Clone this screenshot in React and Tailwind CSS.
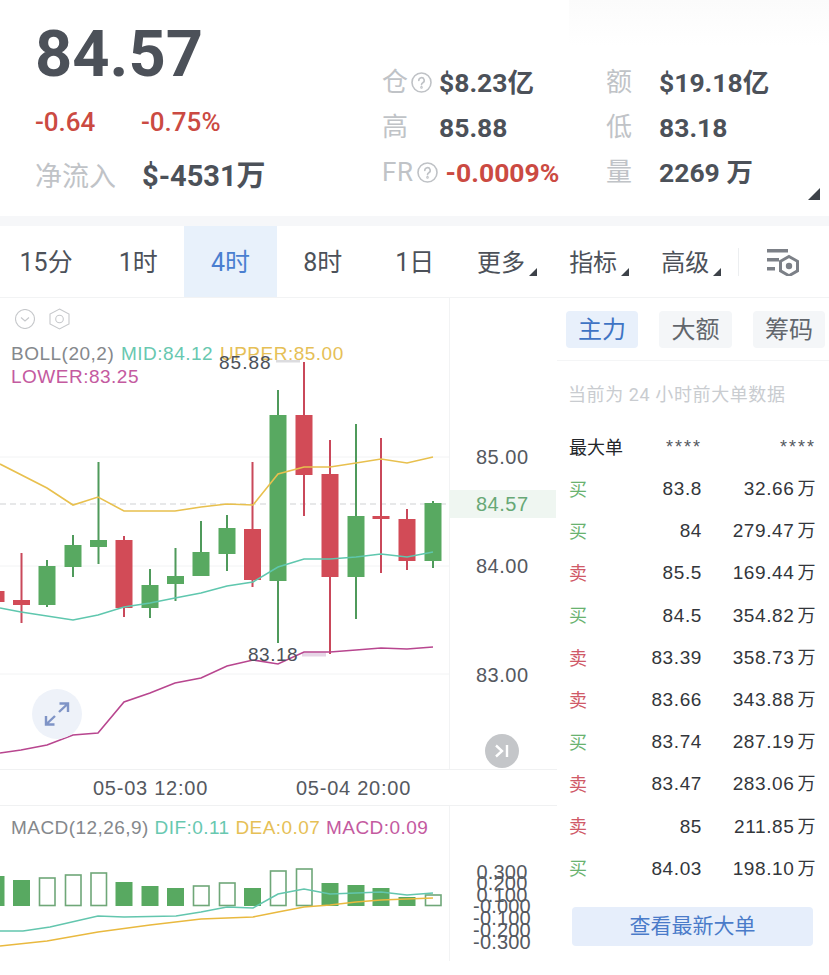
const SANS = "font-['Roboto','Noto_Sans_CJK_SC',sans-serif]";
const NUM = "font-['Liberation_Sans','Noto_Sans_CJK_SC',sans-serif]";

const GREEN = "#58a961";
const RED = "#d24b57";

// [center x, wick top, body top, body bottom, wick bottom, up?]
const candles = [
  [-4, 585, 591, 602, 606, false],
  [21.5, 553, 600, 605, 623, false],
  [47, 560, 566, 605, 607, true],
  [73, 535, 545, 567, 577, true],
  [98.5, 462, 540, 547, 564, true],
  [124, 536, 540, 608, 617, false],
  [150, 569, 585, 608, 618, true],
  [175.5, 548, 576, 584, 601, true],
  [201, 521, 552, 576, 576, true],
  [227, 515, 528, 554, 571, true],
  [252.5, 462, 529, 580, 587, false],
  [278, 390, 415, 581, 643, true],
  [304, 362, 415, 475, 516, false],
  [330, 440, 474, 577, 654, false],
  [356, 424, 516, 577, 619, true],
  [381, 438, 516, 519, 573, false],
  [407, 509, 519, 561, 570, false],
  [433, 501, 503, 561, 568, true],
];

const upper = "0,464 47,488 73,505 98,497 124,511 175,511 201,507 227,504 253,505 278,474 304,467 330,467 356,463 381,459 407,463 433,457";
const mid = "0,608 21,612 73,620 98,615 124,607 150,603 175,598 201,593 227,586 253,582 278,567 304,559 330,559 356,557 381,554 407,557 433,552";
const lower = "0,753 21,750 47,745 73,735 98,733 124,702 150,693 175,683 201,678 227,666 253,660 278,664 304,652 330,652 356,650 381,648 407,649 433,647";

// [center x, top, solid?]
const macdBars = [
  [-4, 876, true], [21.5, 880, true], [47, 878, false], [73, 875, false], [98.5, 873, false],
  [124, 882, true], [150, 886, true], [175.5, 888, true], [201, 886, false], [227, 883, false],
  [252.5, 888, true], [278, 871, false], [304, 869, false], [330, 883, true], [356, 885, true],
  [381, 888, true], [407, 897, true], [433, 895, false],
];
const dif = "0,931 23,931 50,927 98,916 124,917 176,916 201,912 227,907 253,908 278,894 304,889 330,894 356,893 381,892 407,895 433,893";
const dea = "0,946 47,941 98,932 150,925 201,919 253,917 278,912 304,907 330,905 356,902 381,900 407,899 433,898";

const orders = [
  ["买", "83.8", "32.66"],
  ["买", "84", "279.47"],
  ["卖", "85.5", "169.44"],
  ["买", "84.5", "354.82"],
  ["卖", "83.39", "358.73"],
  ["卖", "83.66", "343.88"],
  ["买", "83.74", "287.19"],
  ["卖", "83.47", "283.06"],
  ["卖", "85", "211.85"],
  ["买", "84.03", "198.10"],
];

const macdTicks = [
  ["0.300", 872], ["0.200", 883], ["0.100", 895], ["-0.000", 906],
  ["-0.100", 918], ["-0.200", 930], ["-0.300", 942],
];

function Corner({ className }) {
  return (
    <svg viewBox="0 0 10 10" className={className}>
      <path d="M10 0V10H0Z" fill="#3d4249" />
    </svg>
  );
}

function Help() {
  return (
    <svg width="21" height="21" viewBox="0 0 21 21" className="shrink-0" fill="none" stroke="#bfc2c6" strokeWidth="1.6">
      <circle cx="10.5" cy="10.5" r="9.5" />
      <path d="M7.8 8.4a2.7 2.7 0 1 1 4 2.3c-.9.5-1.3 1-1.3 2" strokeLinecap="round" />
      <circle cx="10.5" cy="15.4" r=".5" />
    </svg>
  );
}

function Stat({ label, help, value }) {
  return (
    <div className="flex items-center h-[45px]">
      <div className="flex items-center w-[57px] text-[26px] text-[#c0c3c7]">
        {label}
        {help && <span className="ml-[3px]"><Help /></span>}
      </div>
      <span className="text-[26.5px] font-bold whitespace-nowrap text-[#4c5159]">{value}</span>
    </div>
  );
}

function StatWide({ label, value }) {
  return (
    <div className="flex items-center h-[45px]">
      <div className="w-[53px] text-[26px] text-[#c0c3c7]">{label}</div>
      <span className="text-[26.5px] font-bold whitespace-nowrap text-[#4c5159]">{value}</span>
    </div>
  );
}

function Candles() {
  return candles.map(([x, wt, bt, bb, wb, up]) => (
    <g key={x} fill={up ? GREEN : RED} stroke="none">
      <rect x={x - 1} y={wt} width="2" height={wb - wt} fill={up ? "#4f9a5b" : "#c9485a"} />
      <rect x={x - 8.5} y={bt} width="17" height={bb - bt} />
    </g>
  ));
}

function MainChart() {
  return (
    <svg width="449" height="472" viewBox="0 298 449 472" className="absolute left-0 top-0">
      <line x1="0" x2="449" y1="457" y2="457" stroke="#f2f3f4" />
      <line x1="0" x2="449" y1="566" y2="566" stroke="#f2f3f4" />
      <line x1="0" x2="449" y1="674" y2="674" stroke="#f2f3f4" />
      <line x1="0" x2="449" y1="504" y2="504" stroke="#cfd1d3" strokeDasharray="6 4" />
      <rect x="276" y="360" width="24" height="2.5" fill="#dcdcdf" />
      <rect x="302" y="652.5" width="24" height="4" fill="#e6d5e6" />
      <Candles />
      <polyline points={upper} fill="none" stroke="#e8c04e" strokeWidth="1.6" />
      <polyline points={mid} fill="none" stroke="#5fc7ae" strokeWidth="1.6" />
      <polyline points={lower} fill="none" stroke="#b8468f" strokeWidth="1.6" />
    </svg>
  );
}

function MacdChart() {
  return (
    <svg width="449" height="155" viewBox="0 806 449 155" className="absolute left-0 top-0">
      {macdBars.map(([x, top, solid]) =>
        solid ? (
          <rect key={x} x={x - 8.5} y={top} width="17" height={906 - top} fill={GREEN} />
        ) : (
          <rect key={x} x={x - 7.5} y={top} width="15.5" height={905.5 - top} fill="none" stroke="#6fa778" strokeWidth="1.6" />
        )
      )}
      <polyline points={dif} fill="none" stroke="#63c6ae" strokeWidth="1.6" />
      <polyline points={dea} fill="none" stroke="#e9b93f" strokeWidth="1.6" />
    </svg>
  );
}

export default function App() {
  const tabs = ["15分", "1时", "4时", "8时", "1日"];

  return (
    <div className={`w-[829px] h-[975px] bg-white overflow-hidden ${SANS}`}>
      {/* Quote header */}
      <div className="relative flex h-[216px] bg-white">
        <div className="absolute right-0 top-0 w-[260px] h-[45px] bg-linear-to-b from-[#fbfbfb] to-white" />
        <div className="w-[382px] pl-[35px] shrink-0">
          <div className="text-[65px] leading-none font-bold text-[#4c5159] mt-[22px] h-[71px]">84.57</div>
          <div className="flex items-center h-[30px] mt-[14px] text-[26px] font-medium text-[#cb4a42]">
            <span className="w-[106px]">-0.64</span>
            <span>-0.75%</span>
          </div>
          <div className="flex items-center h-[40px] mt-[20px]">
            <span className="w-[107px] text-[27px] text-[#c0c3c7]">净流入</span>
            <span className="text-[29px] font-bold text-[#4c5159]">$-4531万</span>
          </div>
        </div>
        <div className="relative w-[224px] pt-[60px] shrink-0">
          <Stat label="仓" help value="$8.23亿" />
          <Stat label="高" value="85.88" />
          <div className="flex items-center h-[45px]">
            <span className="text-[26px] tracking-[0.6px] text-[#c0c3c7]">FR</span>
            <span className="ml-[3px]"><Help /></span>
            <span className="ml-[8px] text-[26.5px] font-bold whitespace-nowrap text-[#cb4a42]">-0.0009%</span>
          </div>
        </div>
        <div className="relative pt-[60px]">
          <StatWide label="额" value="$19.18亿" />
          <StatWide label="低" value="83.18" />
          <StatWide label="量" value="2269 万" />
        </div>
        <Corner className="absolute right-[9px] top-[188px] w-[12px] h-[12px]" />
      </div>
      <div className="h-[10px] bg-[#f6f7f9]" />

      {/* Interval tabs */}
      <div className="flex h-[72px] items-stretch border-b border-[#f2f3f4]">
        {tabs.map((t) => (
          <div
            key={t}
            className={`w-[92.2px] flex items-center justify-center pt-[3px] text-[25px] ${
              t === "4时" ? "bg-[#e8f1fb] text-[#4a7fd0]" : "text-[#4c5159]"
            }`}
          >
            {t}
          </div>
        ))}
        {["更多", "指标", "高级"].map((t) => (
          <div key={t} className="relative w-[92.2px] flex items-center pl-[16px] pt-[3px] text-[24px] text-[#4c5159]">
            {t}
            <Corner className="absolute left-[68px] top-[42px] w-[8px] h-[8px]" />
          </div>
        ))}
        <div className="flex-1 flex items-center pl-[29px] pt-[2px] relative">
          <span className="absolute left-0 top-[22px] h-[28px] w-px bg-[#eceef0]" />
          <svg width="32" height="27" viewBox="0 0 32 27" fill="#7c8087">
            <rect x="0" y="0" width="21" height="3.5" />
            <rect x="0" y="9" width="12" height="3.5" />
            <rect x="0" y="18" width="8" height="3.5" />
            <path d="M22 7.5l8.5 4.8v9.6L22 26.7l-8.5-4.8v-9.6z" fill="none" stroke="#7c8087" strokeWidth="3" />
            <circle cx="22" cy="17" r="3.2" />
          </svg>
        </div>
      </div>

      <div className="flex">
        {/* Charts */}
        <div className={`w-[557px] shrink-0 ${NUM}`}>
          <div className="relative h-[472px] border-b border-[#f0f1f2] overflow-hidden">
            <MainChart />
            <div className="absolute left-[449px] top-0 bottom-0 w-px bg-[#f2f3f4]" />

            <div className="absolute left-[15px] top-[11px]">
              <svg width="20" height="20" viewBox="0 0 20 20" fill="none" stroke="#c6c8cb" strokeWidth="1.1">
                <circle cx="10" cy="10" r="9.5" />
                <path d="M6 8.5l4 3.5 4-3.5" />
              </svg>
            </div>
            <div className="absolute left-[49px] top-[10px]">
              <svg width="21" height="22" viewBox="0 0 21 22" fill="none" stroke="#c6c8cb" strokeWidth="1.1">
                <path d="M10.5 1l9.5 5v10l-9.5 5L1 16V6z" />
                <circle cx="10.5" cy="11" r="3.8" />
              </svg>
            </div>

            <div className="absolute left-[11px] top-[44px] w-[345px] text-[19px] leading-[23px] tracking-[0.5px] [word-spacing:1px]">
              <span className="text-[#85888c]">BOLL(20,2)</span>{" "}
              <span className="text-[#68c8b0]">MID:84.12</span>{" "}
              <span className="text-[#e6c056]">UPPER:85.00</span>
              <br />
              <span className="text-[#c45aa0]">LOWER:83.25</span>
            </div>

            <span className="absolute left-[219px] top-[53px] text-[19px] leading-[23px] tracking-[1px] text-[#4c5159]">85.88</span>
            <span className="absolute left-[248px] top-[345px] text-[19px] leading-[23px] tracking-[0.5px] text-[#4c5159]">83.18</span>

            {[["85.00", 147], ["84.00", 256], ["83.00", 365]].map(([t, top]) => (
              <span key={t} className="absolute left-[476px] text-[20px] leading-[24px] tracking-[0.5px] text-[#55595f]" style={{ top }}>
                {t}
              </span>
            ))}
            <div className="absolute left-[449px] top-[192px] w-[107px] h-[28px] bg-[#eff6f1] pl-[27px] text-[20px] leading-[28px] tracking-[0.5px] text-[#67a876]">
              84.57
            </div>

            <div className="absolute left-[32px] top-[391px] w-[50px] h-[50px] rounded-full bg-[#eef2f9] flex items-center justify-center">
              <svg width="28" height="28" viewBox="0 0 28 28" fill="none" stroke="#7f94c6" strokeWidth="2.4">
                <path d="M16.5 3.5H25V12M25 3.5L16 12M11.5 24.5H3V16M3 24.5L12 16" />
              </svg>
            </div>
            <div className="absolute left-[485px] top-[436px] w-[34px] h-[34px] rounded-full bg-[#c4c6c9] flex items-center justify-center">
              <svg width="16" height="14" viewBox="0 0 16 14" fill="none" stroke="#fff" strokeWidth="2.4">
                <path d="M2 1.5l6 5.5-6 5.5M13 1v12" />
              </svg>
            </div>
          </div>

          <div className="relative h-[36px] border-b border-[#f0f1f2] text-[20px] leading-[36px] tracking-[0.75px] text-[#55595f]">
            <span className="absolute left-[93px]">05-03 12:00</span>
            <span className="absolute left-[296px]">05-04 20:00</span>
          </div>

          <div className="relative h-[155px] overflow-hidden">
            <MacdChart />
            <div className="absolute left-[449px] top-0 bottom-0 w-px bg-[#f2f3f4]" />
            <div className="absolute left-[11px] top-[10px] text-[19px] leading-[23px] tracking-[0.45px] whitespace-nowrap">
              <span className="text-[#85888c]">MACD(12,26,9)</span>{" "}
              <span className="text-[#68c8b0]">DIF:0.11</span>{" "}
              <span className="text-[#e6c056]">DEA:0.07</span>{" "}
              <span className="text-[#c45aa0]">MACD:0.09</span>
            </div>
            {macdTicks.map(([t, y]) => (
              <span
                key={t}
                className="absolute left-[462px] w-[80px] text-center text-[20px] leading-[20px] tracking-[0.2px] text-[#55595f]"
                style={{ top: y - 806 - 10 }}
              >
                {t}
              </span>
            ))}
          </div>
        </div>

        {/* Large orders */}
        <div className="flex-1 min-w-0">
          <div className="flex gap-[21px] h-[63px] pl-[9px] pt-[13px] border-b border-[#f4f5f6]">
            <div className="w-[72px] h-[37px] rounded bg-[#e8f0fb] text-[#3f74c4] text-[24px] leading-[39px] text-center">主力</div>
            <div className="w-[73px] h-[37px] rounded bg-[#f4f6f8] text-[#62666c] text-[24px] leading-[39px] text-center">大额</div>
            <div className="w-[72px] h-[37px] rounded bg-[#f4f6f8] text-[#62666c] text-[24px] leading-[39px] text-center">筹码</div>
          </div>
          <div className="pl-[11px] mt-[21px] text-[18px] leading-[26px] tracking-[0.6px] text-[#c9ccd0] whitespace-nowrap">当前为 24 小时前大单数据</div>
          <div className="pl-[12px] pr-[13px] mt-[18px]">
            <div className="flex items-center h-[42.2px] text-[#23262b]">
              <span className="w-[54px] text-[18px]">最大单</span>
              <span className={`w-[79px] text-right text-[18px] tracking-[2px] text-[#55595f] ${NUM}`}>****</span>
              <span className={`flex-1 text-right text-[18px] tracking-[2px] text-[#55595f] ${NUM}`}>****</span>
            </div>
            {orders.map(([side, price, amount], i) => (
              <div key={i} className="flex items-center h-[42.2px] text-[#33363b]">
                <span className={`w-[54px] text-[18px] ${side === "买" ? "text-[#69b26f]" : "text-[#d05a68]"}`}>{side}</span>
                <span className={`w-[79px] text-right text-[19px] tracking-[0.6px] ${NUM}`}>{price}</span>
                <span className={`flex-1 text-right text-[19px] tracking-[0.6px] ${NUM}`}>
                  {amount}
                  <span className="ml-[3px] text-[18px]">万</span>
                </span>
              </div>
            ))}
          </div>
          <div className="ml-[15px] mt-[17px] w-[241px] h-[39px] rounded bg-[#e6eefb] text-[#4a7bc9] text-[21px] leading-[39px] text-center">
            查看最新大单
          </div>
        </div>
      </div>
    </div>
  );
}
